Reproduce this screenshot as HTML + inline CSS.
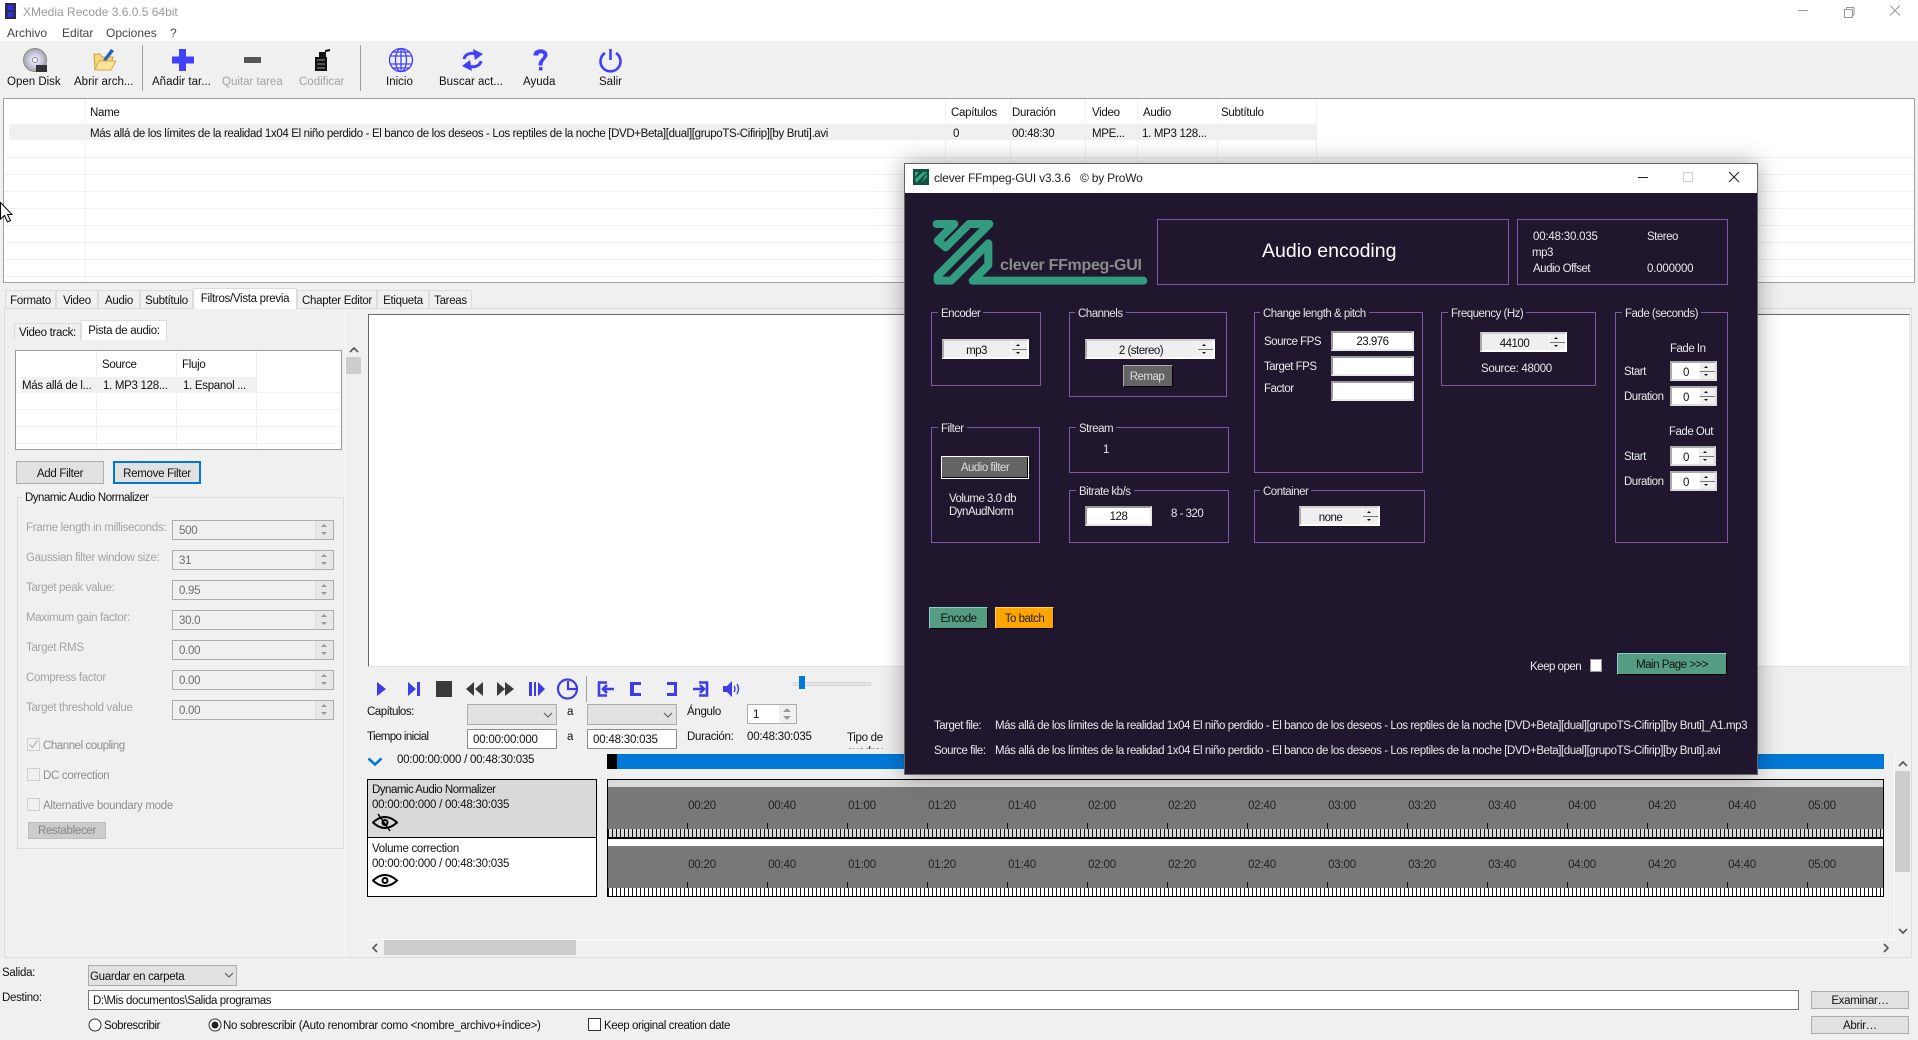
<!DOCTYPE html>
<html><head><meta charset="utf-8"><title>XMedia Recode</title>
<style>
html,body{margin:0;padding:0;width:1918px;height:1040px;overflow:hidden;background:#f0f0f0}
body{position:relative;font-family:"Liberation Sans",sans-serif;font-size:11.5px;color:#111;letter-spacing:-.3px}
.a{position:absolute;box-sizing:border-box}
.t{position:absolute;white-space:nowrap;line-height:14px;margin-top:1px}
.tb{letter-spacing:0}
.g{color:#a3a3a3}
.hl{position:absolute;height:1px;background:#f0f0f0}
.vl{position:absolute;width:1px;background:#f0f0f0}
.btn{position:absolute;box-sizing:border-box;background:#e1e1e1;border:1px solid #adadad;text-align:center;white-space:nowrap}
.tab{position:absolute;box-sizing:border-box;top:290px;height:18px;background:#f0f0f0;border:1px solid #dcdcdc;border-bottom:0;text-align:center;line-height:20px;white-space:nowrap}
.f{position:absolute;left:172px;width:162px;height:20px;box-sizing:border-box;border:1px solid #adadad;background:#f0f0f0;color:#6d6d6d;padding-left:6px;line-height:20px}
.f i{position:absolute;right:0;top:0;width:17px;height:18px;border-left:1px solid #ddd;background:#e8e8e8}
.f i:before,.f i:after{content:"";position:absolute;left:5px;border-left:3px solid transparent;border-right:3px solid transparent}
.f i:before{top:3px;border-bottom:3px solid #999}.f i:after{top:11px;border-top:3px solid #999}
.ck{position:absolute;left:27px;width:13px;height:13px;box-sizing:border-box;border:1px solid #cfcfcf;background:#f0f0f0}
.gb{position:absolute;box-sizing:border-box;border:1px solid #dcdcdc}
.combo{position:absolute;box-sizing:border-box;background:#e1e1e1;border:1px solid #adadad}
.in{position:absolute;box-sizing:border-box;background:#fff;border:1px solid #8e8e8e;padding-left:5px;line-height:20px;white-space:nowrap}
#d{position:absolute;left:904px;top:163px;width:854px;height:612px;box-sizing:border-box;border:1px solid #666;background:#20172f;box-shadow:0 0 22px rgba(0,0,0,.35);z-index:5}
#dw{position:absolute;left:0;top:0;width:1918px;height:1040px;z-index:6;color:#e9e9e9;letter-spacing:-.5px}
.p{position:absolute;box-sizing:border-box;border:1px solid #7b58a9}
.pt{position:absolute;white-space:nowrap;line-height:14px;background:#20172f;padding:0 3px;color:#e4e4e4;margin-top:2px}
.dc{position:absolute;box-sizing:border-box;height:20px;background:#efefef;border:2px solid #fff;border-top-color:#d0d0d0;border-left-color:#a8a8a8;color:#111;text-align:center;line-height:20px;padding-right:18px}
.dc i,.dw i{position:absolute;right:0;top:0;width:15px;height:16px;background:#efefef;border-left:1px solid #fff}
.dc i:before,.dw i:before,.dc i:after,.dw i:after{content:"";position:absolute;left:4px;border-left:2px solid transparent;border-right:2px solid transparent}
.dc i:before,.dw i:before{top:3px;border-bottom:2px solid #111}
.dc i:after,.dw i:after{top:11px;border-top:2px solid #111}
.dc b,.dw b{position:absolute;right:0;top:8px;width:15px;height:1px;background:#777}
.dw{position:absolute;box-sizing:border-box;height:20px;background:#fff;border:2px solid #ddd;border-top-color:#aaa;border-left-color:#aaa;color:#111;line-height:20px;padding-left:11px}
.di{position:absolute;box-sizing:border-box;height:20px;left:1331px;width:83px;background:#fff;border:2px solid #e8e8e8;border-top-color:#999;border-left-color:#999;color:#111;text-align:center;line-height:19px}
.db{position:absolute;box-sizing:border-box;text-align:center;white-space:nowrap}
.tl{position:absolute;font-size:11.5px;color:#222;line-height:14px;width:40px;text-align:center;letter-spacing:-.2px}
</style></head><body>

<!-- title + menu -->
<div class="a" style="left:0;top:0;width:1918px;height:41px;background:#fff"></div>
<svg class="a" style="left:5px;top:3px" width="11" height="16"><rect width="11" height="16" fill="#2a2a4a"/><rect x="2.500" y="2" width="6" height="5" fill="#2f2fe0"/><rect x="2.500" y="9" width="6" height="5" fill="#2f2fe0"/></svg>
<span class="t tb" style="left:23px;top:4px;font-size:12px;color:#9a9a9a">XMedia Recode 3.6.0.5 64bit</span>
<svg class="a" style="left:1798px;top:4px" width="110" height="14" fill="none" stroke="#999"><path d="M0 6.500H10"/><path d="M46.500 5.500h8v8h-8zM48.500 5V3.500h7.500v7.500H55"/><path d="M92 1.500l10 10M102 1.500l-10 10"/></svg>
<span class="t tb" style="left:7px;top:25px;color:#444;font-size:12px">Archivo</span>
<span class="t tb" style="left:62px;top:25px;color:#444;font-size:12px">Editar</span>
<span class="t tb" style="left:106px;top:25px;color:#444;font-size:12px">Opciones</span>
<span class="t tb" style="left:170px;top:25px;color:#444;font-size:12px">?</span>

<!-- toolbar -->
<div class="a" style="left:142px;top:45px;width:1px;height:46px;background:#a0a0a0"></div>
<div class="a" style="left:360px;top:45px;width:1px;height:46px;background:#a0a0a0"></div>
<svg class="a" style="left:0;top:40px" width="640" height="34">
<defs><radialGradient id="cd"><stop offset="0" stop-color="#fff"/><stop offset=".5" stop-color="#cfcfe8"/><stop offset="1" stop-color="#a5a5a5"/></radialGradient></defs>
<circle cx="35" cy="20" r="11.500" fill="url(#cd)" stroke="#8a8a8a"/><circle cx="35" cy="20" r="2.500" fill="#fff" stroke="#888"/><rect x="36" y="25" width="11" height="7" fill="#333"/>
<path d="M94 14h6l2 3h11l-3 13H95z" fill="#f5d67a" stroke="#c8a23c"/><path d="M103 20l8-11 3 2-8 10z" fill="#2060c0"/><path d="M95 30l4-9h17l-5 9z" fill="#fbe49a" stroke="#d0ab4a"/>
<path d="M179 9h7v7.500h8v7h-8V31h-7v-7.500h-7v-7h7z" fill="#4040ff"/>
<rect x="244" y="17" width="17" height="6" fill="#555"/>
<path d="M315 17h4v-5h6v-2l5-1v2l-4 1v5h1v14h-12z" fill="#111"/><path d="M317 20h8M317 24h8M317 28h8" stroke="#999" stroke-width="1"/>
<g fill="none" stroke="#4040ff" stroke-width="1.300"><circle cx="401" cy="20" r="11.500"/><ellipse cx="401" cy="20" rx="5.500" ry="11.500"/><path d="M401 8.500v23M390 16h22M390 24h22M392 12h18M392 28h18"/></g>
<g fill="none" stroke="#4040ff" stroke-width="3"><path d="M464 19c1-5 7-7 12-5"/><path d="M481 21c-1 5-7 7-12 5"/></g>
<path d="M473 9l10 5-8 6zM472 31l-10-5 8-6z" fill="#4040ff"/>
<path d="M534 15c0-7 13-7 13 0 0 4-5 4-5 10h-3c0-6 5-6 5-10 0-3-6-3-6 0z" fill="#4040ff" stroke="#4040ff"/><rect x="539" y="27" width="3.500" height="3.500" fill="#4040ff"/>
<path d="M605 13a10 10 0 1 0 11 0" fill="none" stroke="#4040ff" stroke-width="2.600"/><path d="M610.500 9v11" stroke="#4040ff" stroke-width="2.600"/>
</svg>
<span class="t tb" style="left:7px;top:74px">Open Disk</span>
<span class="t tb" style="left:74px;top:74px">Abrir arch...</span>
<span class="t tb" style="left:152px;top:74px">Añadir tar...</span>
<span class="t tb g" style="left:222px;top:74px">Quitar tarea</span>
<span class="t tb g" style="left:299px;top:74px">Codificar</span>
<span class="t tb" style="left:386px;top:74px">Inicio</span>
<span class="t tb" style="left:439px;top:74px">Buscar act...</span>
<span class="t tb" style="left:523px;top:74px">Ayuda</span>
<span class="t tb" style="left:599px;top:74px">Salir</span>

<!-- top table -->
<div class="a" style="left:3px;top:98px;width:1912px;height:185px;background:#fff;border:1px solid #a0a0a0"></div>
<div class="a" style="left:9px;top:124px;width:1307px;height:16px;background:#f0f0f0"></div>
<div class="hl" style="left:4px;top:157px;width:1910px"></div><div class="hl" style="left:4px;top:174px;width:1910px"></div><div class="hl" style="left:4px;top:191px;width:1910px"></div><div class="hl" style="left:4px;top:208px;width:1910px"></div><div class="hl" style="left:4px;top:225px;width:1910px"></div><div class="hl" style="left:4px;top:242px;width:1910px"></div><div class="hl" style="left:4px;top:259px;width:1910px"></div><div class="hl" style="left:4px;top:276px;width:1910px"></div>
<div class="vl" style="left:85px;top:99px;height:183px"></div><div class="vl" style="left:945px;top:99px;height:183px"></div><div class="vl" style="left:1010px;top:99px;height:183px"></div><div class="vl" style="left:1085px;top:99px;height:183px"></div><div class="vl" style="left:1137px;top:99px;height:183px"></div><div class="vl" style="left:1217px;top:99px;height:183px"></div><div class="vl" style="left:1316px;top:99px;height:183px"></div>
<span class="t" style="left:90px;top:105px">Name</span>
<span class="t" style="left:951px;top:105px">Capítulos</span>
<span class="t" style="left:1012px;top:105px">Duración</span>
<span class="t" style="left:1092px;top:105px">Video</span>
<span class="t" style="left:1143px;top:105px">Audio</span>
<span class="t" style="left:1221px;top:105px">Subtítulo</span>
<span class="t" style="left:90px;top:126px;letter-spacing:-.35px">Más allá de los límites de la realidad 1x04 El niño perdido - El banco de los deseos - Los reptiles de la noche [DVD+Beta][dual][grupoTS-Cifirip][by Bruti].avi</span>
<span class="t" style="left:953px;top:126px">0</span>
<span class="t" style="left:1012px;top:126px">00:48:30</span>
<span class="t" style="left:1092px;top:126px">MPE...</span>
<span class="t" style="left:1142px;top:126px">1. MP3 128...</span>
<svg class="a" style="left:0;top:202px;z-index:2" width="14" height="22"><path d="M.5.500V17l4-3.500 3 6.500 3-1.500-3-6H12z" fill="#fff" stroke="#000"/></svg>

<!-- tabs + panel -->
<div class="a" style="left:4px;top:308px;width:1908px;height:650px;border:1px solid #dcdcdc;background:#f0f0f0"></div>
<div class="tab" style="left:5px;width:51px">Formato</div>
<div class="tab" style="left:56px;width:42px">Video</div>
<div class="tab" style="left:98px;width:42px">Audio</div>
<div class="tab" style="left:140px;width:53px">Subtítulo</div>
<div class="tab" style="left:193px;top:288px;width:104px;height:21px;background:#fff;line-height:20px">Filtros/Vista previa</div>
<div class="tab" style="left:297px;width:80px">Chapter Editor</div>
<div class="tab" style="left:377px;width:52px">Etiqueta</div>
<div class="tab" style="left:429px;width:43px">Tareas</div>
<div class="a" style="left:345px;top:309px;width:1px;height:648px;background:#fafafa"></div>

<!-- left panel -->
<div class="tab" style="left:14px;top:323px;width:67px;height:17px;line-height:19px">Video track:</div>
<div class="tab" style="left:81px;top:320px;width:86px;height:20px;background:#fff;line-height:20px;border-bottom:0">Pista de audio:</div>
<div class="a" style="left:15px;top:350px;width:327px;height:100px;background:#fff;border:1px solid #9a9a9a"></div>
<div class="a" style="left:21px;top:377px;width:236px;height:16px;background:#f0f0f0"></div>
<div class="hl" style="left:16px;top:392px;width:325px"></div><div class="hl" style="left:16px;top:409px;width:325px"></div><div class="hl" style="left:16px;top:426px;width:325px"></div><div class="hl" style="left:16px;top:443px;width:325px"></div>
<div class="vl" style="left:96px;top:351px;height:98px"></div><div class="vl" style="left:176px;top:351px;height:98px"></div><div class="vl" style="left:256px;top:351px;height:98px"></div>
<span class="t" style="left:102px;top:357px">Source</span>
<span class="t" style="left:182px;top:357px">Flujo</span>
<span class="t" style="left:22px;top:378px">Más allá de l...</span>
<span class="t" style="left:103px;top:378px">1. MP3 128...</span>
<span class="t" style="left:183px;top:378px">1. Espanol ...</span>
<div class="btn" style="left:16px;top:461px;width:88px;height:23px;line-height:24px">Add Filter</div>
<div class="btn" style="left:113px;top:461px;width:88px;height:23px;line-height:22px;border:2px solid #0078d7">Remove Filter</div>
<div class="gb" style="left:17px;top:497px;width:327px;height:352px"></div>
<span class="t" style="left:22px;top:490px;background:#f0f0f0;padding:0 3px;letter-spacing:-.5px">Dynamic Audio Normalizer</span>
<span class="t g" style="left:26px;top:520px">Frame length in milliseconds:</span><div class="f" style="top:520px">500<i></i></div>
<span class="t g" style="left:26px;top:550px">Gaussian filter window size:</span><div class="f" style="top:550px">31<i></i></div>
<span class="t g" style="left:26px;top:580px">Target peak value:</span><div class="f" style="top:580px">0.95<i></i></div>
<span class="t g" style="left:26px;top:610px">Maximum gain factor:</span><div class="f" style="top:610px">30.0<i></i></div>
<span class="t g" style="left:26px;top:640px">Target RMS</span><div class="f" style="top:640px">0.00<i></i></div>
<span class="t g" style="left:26px;top:670px">Compress factor</span><div class="f" style="top:670px">0.00<i></i></div>
<span class="t g" style="left:26px;top:700px">Target threshold value</span><div class="f" style="top:700px">0.00<i></i></div>
<div class="ck" style="top:738px"></div><svg class="a" style="left:28px;top:739px" width="11" height="11"><path d="M1.500 5.500l3 3 5-7" fill="none" stroke="#b5b5b5" stroke-width="1.300"/></svg>
<span class="t g" style="left:43px;top:738px;color:#8e8e8e;letter-spacing:-.45px">Channel coupling</span>
<div class="ck" style="top:768px"></div><span class="t" style="left:43px;top:768px;color:#8e8e8e">DC correction</span>
<div class="ck" style="top:798px"></div><span class="t" style="left:43px;top:798px;color:#8e8e8e">Alternative boundary mode</span>
<div class="btn" style="left:28px;top:822px;width:78px;height:17px;line-height:16px;background:#cccccc;color:#858585;border-color:#bdbdbd">Restablecer</div>
<svg class="a" style="left:349px;top:346px" width="10" height="7"><path d="M1 6l4-4 4 4" fill="none" stroke="#555" stroke-width="1.600"/></svg>
<div class="a" style="left:346px;top:357px;width:15px;height:17px;background:#cdcdcd"></div>

<!-- preview -->
<div class="a" style="left:368px;top:314px;width:1542px;height:353px;background:#fff;border-top:1px solid #696969;border-left:1px solid #696969;border-right:1px solid #e3e3e3;border-bottom:1px solid #e3e3e3"></div>

<!-- player controls -->
<svg class="a" style="left:370px;top:676px" width="510" height="26">
<g fill="#3c3ce8">
<path d="M7 6l9 7-9 7z"/>
<path d="M38 6l8 7-8 7zM47 6h3v14h-3z"/>
<path d="M113 6v14l-8-7zM104 6v14l-8-7z" fill="#3a3a3a"/>
<path d="M127 6v14l8-7zM135 6v14l9-7z" fill="#3a3a3a"/>
<path d="M159 6h3v14h-3zM164 6h2v14h-2zM168 6l7 7-7 7z"/>
<path d="M260 6h11v3h-7v8h7v3h-11z"/>
<path d="M297 6h10v14h-10v-3h7v-8h-7z"/>
<path d="M353 10h4l5-5v16l-5-5h-4z"/>
</g>
<rect x="66" y="5" width="16" height="16" fill="#3a3a3a"/>
<g fill="none" stroke="#3c3ce8" stroke-width="2.200"><circle cx="197.500" cy="13" r="9.500"/><path d="M198 5v8h8"/>
<path d="M237 6.500h-8v13h8M244 13H233M237 9l-4 4 4 4" stroke-width="2.600"/>
<path d="M323 13h11M330 9l4 4-4 4M329 6.500h8v13h-8" stroke-width="2.600"/>
<path d="M364 10q2 3 0 6M367 8q3 5 0 10" stroke-width="1.400"/>
</g>
</svg>
<div class="a" style="left:586px;top:676px;width:1px;height:26px;background:#a0a0a0"></div>
<div class="a" style="left:793px;top:682px;width:78px;height:4px;background:#e6e6e6;border:1px solid #d6d6d6"></div>
<div class="a" style="left:799px;top:676px;width:6px;height:13px;background:#0078d7"></div>
<span class="t" style="left:367px;top:704px;letter-spacing:-.5px">Capítulos:</span>
<div class="combo" style="left:467px;top:704px;width:90px;height:21px"></div>
<svg class="a" style="left:543px;top:712px" width="10" height="7"><path d="M1 1l4 4 4-4" fill="none" stroke="#555"/></svg>
<span class="t" style="left:567px;top:704px">a</span>
<div class="combo" style="left:587px;top:704px;width:90px;height:21px"></div>
<svg class="a" style="left:663px;top:712px" width="10" height="7"><path d="M1 1l4 4 4-4" fill="none" stroke="#555"/></svg>
<span class="t" style="left:687px;top:704px">Ángulo</span>
<div class="in" style="left:747px;top:704px;width:50px;height:20px;border-color:#adadad;padding-left:5px">1</div>
<div class="a" style="left:779px;top:705px;width:17px;height:18px;background:#f0f0f0"></div>
<svg class="a" style="left:782px;top:707px" width="10" height="14" fill="#999"><path d="M1 5l4-4 4 4zM1 9l4 4 4-4z"/></svg>
<span class="t" style="left:367px;top:729px;letter-spacing:-.6px">Tiempo inicial</span>
<div class="in" style="left:467px;top:729px;width:90px;height:20px;letter-spacing:-.2px">00:00:00:000</div>
<span class="t" style="left:567px;top:729px">a</span>
<div class="in" style="left:587px;top:729px;width:90px;height:20px;letter-spacing:-.2px">00:48:30:035</div>
<span class="t" style="left:687px;top:729px">Duración:</span>
<span class="t" style="left:747px;top:729px;letter-spacing:-.2px">00:48:30:035</span>
<div class="a" style="left:847px;top:731px;width:50px;height:18px;overflow:hidden;line-height:14px">Tipo de cuadro:</div>
<svg class="a" style="left:367px;top:757px" width="16" height="10"><path d="M1.500 1.500l6.500 6 6.500-6" fill="none" stroke="#0078d7" stroke-width="2.600"/></svg>
<span class="t" style="left:397px;top:752px;letter-spacing:-.25px">00:00:00:000 / 00:48:30:035</span>
<div class="a" style="left:607px;top:754px;width:1277px;height:15px;background:#0078d7"></div>
<div class="a" style="left:607px;top:754px;width:10px;height:15px;background:#000"></div>

<!-- filter entries -->
<div class="a" style="left:367px;top:779px;width:230px;height:60px;background:#d9d9d9;border:1px solid #000;border-bottom:2px solid #000"></div>
<div class="a" style="left:367px;top:838px;width:230px;height:59px;background:#fff;border:1px solid #000;border-top:0"></div>
<span class="t" style="left:372px;top:782px;letter-spacing:-.5px">Dynamic Audio Normalizer</span>
<span class="t" style="left:372px;top:797px;letter-spacing:-.25px">00:00:00:000 / 00:48:30:035</span>
<span class="t" style="left:372px;top:841px">Volume correction</span>
<span class="t" style="left:372px;top:856px;letter-spacing:-.25px">00:00:00:000 / 00:48:30:035</span>
<svg class="a" style="left:372px;top:813px" width="27" height="19" fill="none" stroke="#000" stroke-width="2"><path d="M1 9.500q12-11 24 0q-12 11-24 0z"/><circle cx="13" cy="9.500" r="2.500"/><path d="M6 1l12 17" stroke-width="1.500"/></svg>
<svg class="a" style="left:372px;top:871px" width="27" height="19" fill="none" stroke="#000" stroke-width="2"><path d="M1 9.500q12-11 24 0q-12 11-24 0z"/><circle cx="13" cy="9.500" r="2.500"/></svg>

<!-- timelines -->
<div class="a" style="left:607px;top:779px;width:1277px;height:118px;border:1px solid #000;background:#fff"></div>
<div class="a" style="left:608px;top:780px;width:1275px;height:7px;background:#d9d9d9"></div>
<div class="a" style="left:608px;top:787px;width:1275px;height:42px;background:#787878"></div>
<div class="a" style="left:608px;top:829px;width:1275px;height:8px;background:repeating-linear-gradient(90deg,#111 0,#111 1px,#d9d9d9 1px,#d9d9d9 4px)"></div>
<div class="a" style="left:607px;top:837px;width:1277px;height:2px;background:#000"></div>
<div class="a" style="left:608px;top:846px;width:1275px;height:42px;background:#787878"></div>
<div class="a" style="left:608px;top:888px;width:1275px;height:8px;background:repeating-linear-gradient(90deg,#111 0,#111 1px,#fff 1px,#fff 4px)"></div>
<div class="a" style="left:607px;top:823px;width:1277px;height:6px;background-size:80px 6px;background-image:linear-gradient(90deg,#111 1px,transparent 1px)"></div>
<div class="a" style="left:607px;top:882px;width:1277px;height:6px;background-size:80px 6px;background-image:linear-gradient(90deg,#111 1px,transparent 1px)"></div>
<span class="tl" style="left:682px;top:799px">00:20</span><span class="tl" style="left:762px;top:799px">00:40</span><span class="tl" style="left:842px;top:799px">01:00</span><span class="tl" style="left:922px;top:799px">01:20</span><span class="tl" style="left:1002px;top:799px">01:40</span><span class="tl" style="left:1082px;top:799px">02:00</span><span class="tl" style="left:1162px;top:799px">02:20</span><span class="tl" style="left:1242px;top:799px">02:40</span><span class="tl" style="left:1322px;top:799px">03:00</span><span class="tl" style="left:1402px;top:799px">03:20</span><span class="tl" style="left:1482px;top:799px">03:40</span><span class="tl" style="left:1562px;top:799px">04:00</span><span class="tl" style="left:1642px;top:799px">04:20</span><span class="tl" style="left:1722px;top:799px">04:40</span><span class="tl" style="left:1802px;top:799px">05:00</span>
<span class="tl" style="left:682px;top:858px">00:20</span><span class="tl" style="left:762px;top:858px">00:40</span><span class="tl" style="left:842px;top:858px">01:00</span><span class="tl" style="left:922px;top:858px">01:20</span><span class="tl" style="left:1002px;top:858px">01:40</span><span class="tl" style="left:1082px;top:858px">02:00</span><span class="tl" style="left:1162px;top:858px">02:20</span><span class="tl" style="left:1242px;top:858px">02:40</span><span class="tl" style="left:1322px;top:858px">03:00</span><span class="tl" style="left:1402px;top:858px">03:20</span><span class="tl" style="left:1482px;top:858px">03:40</span><span class="tl" style="left:1562px;top:858px">04:00</span><span class="tl" style="left:1642px;top:858px">04:20</span><span class="tl" style="left:1722px;top:858px">04:40</span><span class="tl" style="left:1802px;top:858px">05:00</span>

<!-- scrollbars -->
<div class="a" style="left:367px;top:939px;width:1528px;height:1px;background:#fff"></div>
<div class="a" style="left:1894px;top:754px;width:1px;height:186px;background:#fff"></div>
<div class="a" style="left:384px;top:940px;width:192px;height:15px;background:#cdcdcd"></div>
<div class="a" style="left:1895px;top:771px;width:15px;height:101px;background:#cdcdcd"></div>
<svg class="a" style="left:371px;top:943px" width="8" height="10"><path d="M6 1L2 5l4 4" fill="none" stroke="#555" stroke-width="1.600"/></svg>
<svg class="a" style="left:1882px;top:943px" width="8" height="10"><path d="M2 1l4 4-4 4" fill="none" stroke="#555" stroke-width="1.600"/></svg>
<svg class="a" style="left:1898px;top:760px" width="10" height="7"><path d="M1 6l4-4 4 4" fill="none" stroke="#555" stroke-width="1.600"/></svg>
<svg class="a" style="left:1898px;top:928px" width="10" height="7"><path d="M1 1l4 4 4-4" fill="none" stroke="#555" stroke-width="1.600"/></svg>

<!-- bottom -->
<span class="t" style="left:2px;top:965px">Salida:</span>
<div class="combo" style="left:88px;top:965px;width:149px;height:21px"></div>
<span class="t" style="left:90px;top:969px">Guardar en carpeta</span>
<svg class="a" style="left:224px;top:972px" width="10" height="7"><path d="M1 1l4 4 4-4" fill="none" stroke="#555"/></svg>
<span class="t" style="left:2px;top:990px">Destino:</span>
<div class="in" style="left:88px;top:990px;width:1711px;height:20px;border-color:#7a7a7a;padding-left:4px;letter-spacing:-.4px">D:\Mis documentos\Salida programas</div>
<div class="btn" style="left:1811px;top:991px;width:98px;height:18px;line-height:18px">Examinar…</div>
<div class="btn" style="left:1811px;top:1016px;width:98px;height:18px;line-height:18px">Abrir…</div>
<svg class="a" style="left:88px;top:1018px" width="14" height="14"><circle cx="7" cy="7" r="6" fill="#fff" stroke="#333"/></svg>
<span class="t" style="left:104px;top:1018px;letter-spacing:-.45px">Sobrescribir</span>
<svg class="a" style="left:208px;top:1018px" width="14" height="14"><circle cx="7" cy="7" r="6" fill="#fff" stroke="#333"/><circle cx="7" cy="7" r="3.500" fill="#222"/></svg>
<span class="t" style="left:223px;top:1018px">No sobrescribir (Auto renombrar como &lt;nombre_archivo+índice&gt;)</span>
<div class="a" style="left:588px;top:1018px;width:13px;height:13px;background:#fff;border:1px solid #333"></div>
<span class="t" style="left:604px;top:1018px;letter-spacing:-.4px">Keep original creation date</span>

<!-- dialog -->
<div id="d"></div>
<div id="dw">
<div class="a" style="left:905px;top:164px;width:852px;height:29px;background:#fff"></div>
<svg class="a" style="left:913px;top:169px" width="16" height="16"><rect width="16" height="16" fill="#12503f"/><path d="M2 3h4L2 8zM3 14l11-11h-4L2 10zM8 14l6-6V4zM3 3" fill="#35a585"/></svg>
<span class="t" style="left:934px;top:170px;color:#222;font-size:12px;white-space:pre;letter-spacing:-.2px">clever FFmpeg-GUI v3.3.6   © by ProWo</span>
<svg class="a" style="left:1636px;top:170px" width="106" height="14" fill="none"><path d="M2 7.500h10" stroke="#222"/><rect x="47.500" y="2.500" width="9" height="9" stroke="#ccc"/><path d="M93 2l10 10M103 2L93 12" stroke="#222"/></svg>

<svg class="a" style="left:925px;top:210px" width="230" height="85"><g transform="scale(.3333)" fill="none" stroke="#319c80" stroke-width="24" stroke-linejoin="round" stroke-linecap="round"><path d="M35 42H88L38 92L62 112L132 42H193L38 197V212H78L190 100V165L143 212H655"/></g></svg>
<span class="t" style="left:1000px;top:257px;font-size:16px;font-weight:bold;color:#8a8a8a;line-height:16px;letter-spacing:-.3px">clever FFmpeg-GUI</span>

<div class="p" style="left:1157px;top:219px;width:352px;height:66px"></div>
<span class="t" style="left:1262px;top:240px;font-size:19.500px;line-height:20px;color:#fff;letter-spacing:0">Audio encoding</span>
<div class="p" style="left:1517px;top:219px;width:211px;height:66px"></div>
<span class="t" style="left:1533px;top:229px;letter-spacing:-.2px">00:48:30.035</span><span class="t" style="left:1647px;top:229px">Stereo</span>
<span class="t" style="left:1532px;top:245px">mp3</span>
<span class="t" style="left:1533px;top:261px">Audio Offset</span><span class="t" style="left:1647px;top:261px;letter-spacing:-.2px">0.000000</span>

<div class="p" style="left:931px;top:312px;width:110px;height:74px"></div><span class="pt" style="left:938px;top:305px">Encoder</span>
<div class="dc" style="left:942px;top:339px;width:87px">mp3<i></i><b></b></div>
<div class="p" style="left:1069px;top:312px;width:158px;height:85px"></div><span class="pt" style="left:1075px;top:305px">Channels</span>
<div class="dc" style="left:1085px;top:339px;width:130px">2 (stereo)<i></i><b></b></div>
<div class="db" style="left:1123px;top:365px;width:50px;height:22px;background:#646464;color:#ddd;line-height:23px;padding-right:2px;border:1px solid #aaa;border-right-color:#000;border-bottom-color:#000">Remap</div>
<div class="p" style="left:1254px;top:312px;width:169px;height:161px"></div><span class="pt" style="left:1260px;top:305px">Change length &amp; pitch</span>
<span class="t" style="left:1264px;top:334px">Source FPS</span><div class="di" style="top:331px">23.976</div>
<span class="t" style="left:1264px;top:359px">Target FPS</span><div class="di" style="top:356px"></div>
<span class="t" style="left:1264px;top:381px">Factor</span><div class="di" style="top:381px"></div>
<div class="p" style="left:1441px;top:312px;width:155px;height:74px"></div><span class="pt" style="left:1448px;top:305px">Frequency (Hz)</span>
<div class="dc" style="left:1480px;top:332px;width:87px">44100<i></i><b></b></div>
<span class="t" style="left:1481px;top:361px;letter-spacing:-.3px">Source: 48000</span>
<div class="p" style="left:1615px;top:312px;width:113px;height:231px"></div><span class="pt" style="left:1622px;top:305px">Fade (seconds)</span>
<span class="t" style="left:1670px;top:341px">Fade In</span>
<span class="t" style="left:1624px;top:364px">Start</span><div class="dw" style="left:1670px;top:361px;width:47px">0<i></i><b></b></div>
<span class="t" style="left:1624px;top:389px">Duration</span><div class="dw" style="left:1670px;top:386px;width:47px">0<i></i><b></b></div>
<span class="t" style="left:1669px;top:424px">Fade Out</span>
<span class="t" style="left:1624px;top:449px">Start</span><div class="dw" style="left:1670px;top:446px;width:46px">0<i></i><b></b></div>
<span class="t" style="left:1624px;top:474px">Duration</span><div class="dw" style="left:1670px;top:471px;width:47px">0<i></i><b></b></div>
<div class="p" style="left:931px;top:427px;width:109px;height:116px"></div><span class="pt" style="left:938px;top:420px">Filter</span>
<div class="db" style="left:941px;top:456px;width:88px;height:23px;background:#646464;color:#ddd;line-height:23px;border:1px solid #fff;box-shadow:inset -1px -1px 0 #000">Audio filter</div>
<span class="t" style="left:949px;top:491px">Volume 3.0 db</span><span class="t" style="left:949px;top:504px">DynAudNorm</span>
<div class="p" style="left:1069px;top:427px;width:160px;height:46px"></div><span class="pt" style="left:1076px;top:420px">Stream</span>
<span class="t" style="left:1103px;top:442px">1</span>
<div class="p" style="left:1069px;top:490px;width:160px;height:53px"></div><span class="pt" style="left:1076px;top:483px">Bitrate kb/s</span>
<div class="di" style="left:1085px;top:506px;width:67px">128</div>
<span class="t" style="left:1171px;top:506px">8 - 320</span>
<div class="p" style="left:1254px;top:490px;width:171px;height:53px"></div><span class="pt" style="left:1260px;top:483px">Container</span>
<div class="dc" style="left:1299px;top:506px;width:81px">none<i></i><b></b></div>

<div class="db" style="left:929px;top:607px;width:59px;height:22px;background:#559d82;color:#111;line-height:23px;border:1px solid #8cc;border-right-color:#000;border-bottom-color:#000">Encode</div>
<div class="db" style="left:995px;top:607px;width:59px;height:22px;background:#ffa500;color:#222;line-height:23px;border:1px solid #fc6;border-right-color:#000;border-bottom-color:#000">To batch</div>
<span class="t" style="left:1530px;top:659px">Keep open</span>
<div class="a" style="left:1590px;top:659px;width:12px;height:13px;background:#fff;border:1px solid #999"></div>
<div class="db" style="left:1617px;top:653px;width:110px;height:22px;background:#559d82;color:#111;line-height:23px;border:1px solid #8cc;border-right-color:#000;border-bottom-color:#000">Main Page &gt;&gt;&gt;</div>
<span class="t" style="left:934px;top:718px">Target file:</span>
<span class="t" style="left:995px;top:718px;letter-spacing:-.43px">Más allá de los límites de la realidad 1x04 El niño perdido - El banco de los deseos - Los reptiles de la noche [DVD+Beta][dual][grupoTS-Cifirip][by Bruti]_A1.mp3</span>
<span class="t" style="left:934px;top:743px">Source file:</span>
<span class="t" style="left:995px;top:743px;letter-spacing:-.43px">Más allá de los límites de la realidad 1x04 El niño perdido - El banco de los deseos - Los reptiles de la noche [DVD+Beta][dual][grupoTS-Cifirip][by Bruti].avi</span>
</div>
</body></html>
